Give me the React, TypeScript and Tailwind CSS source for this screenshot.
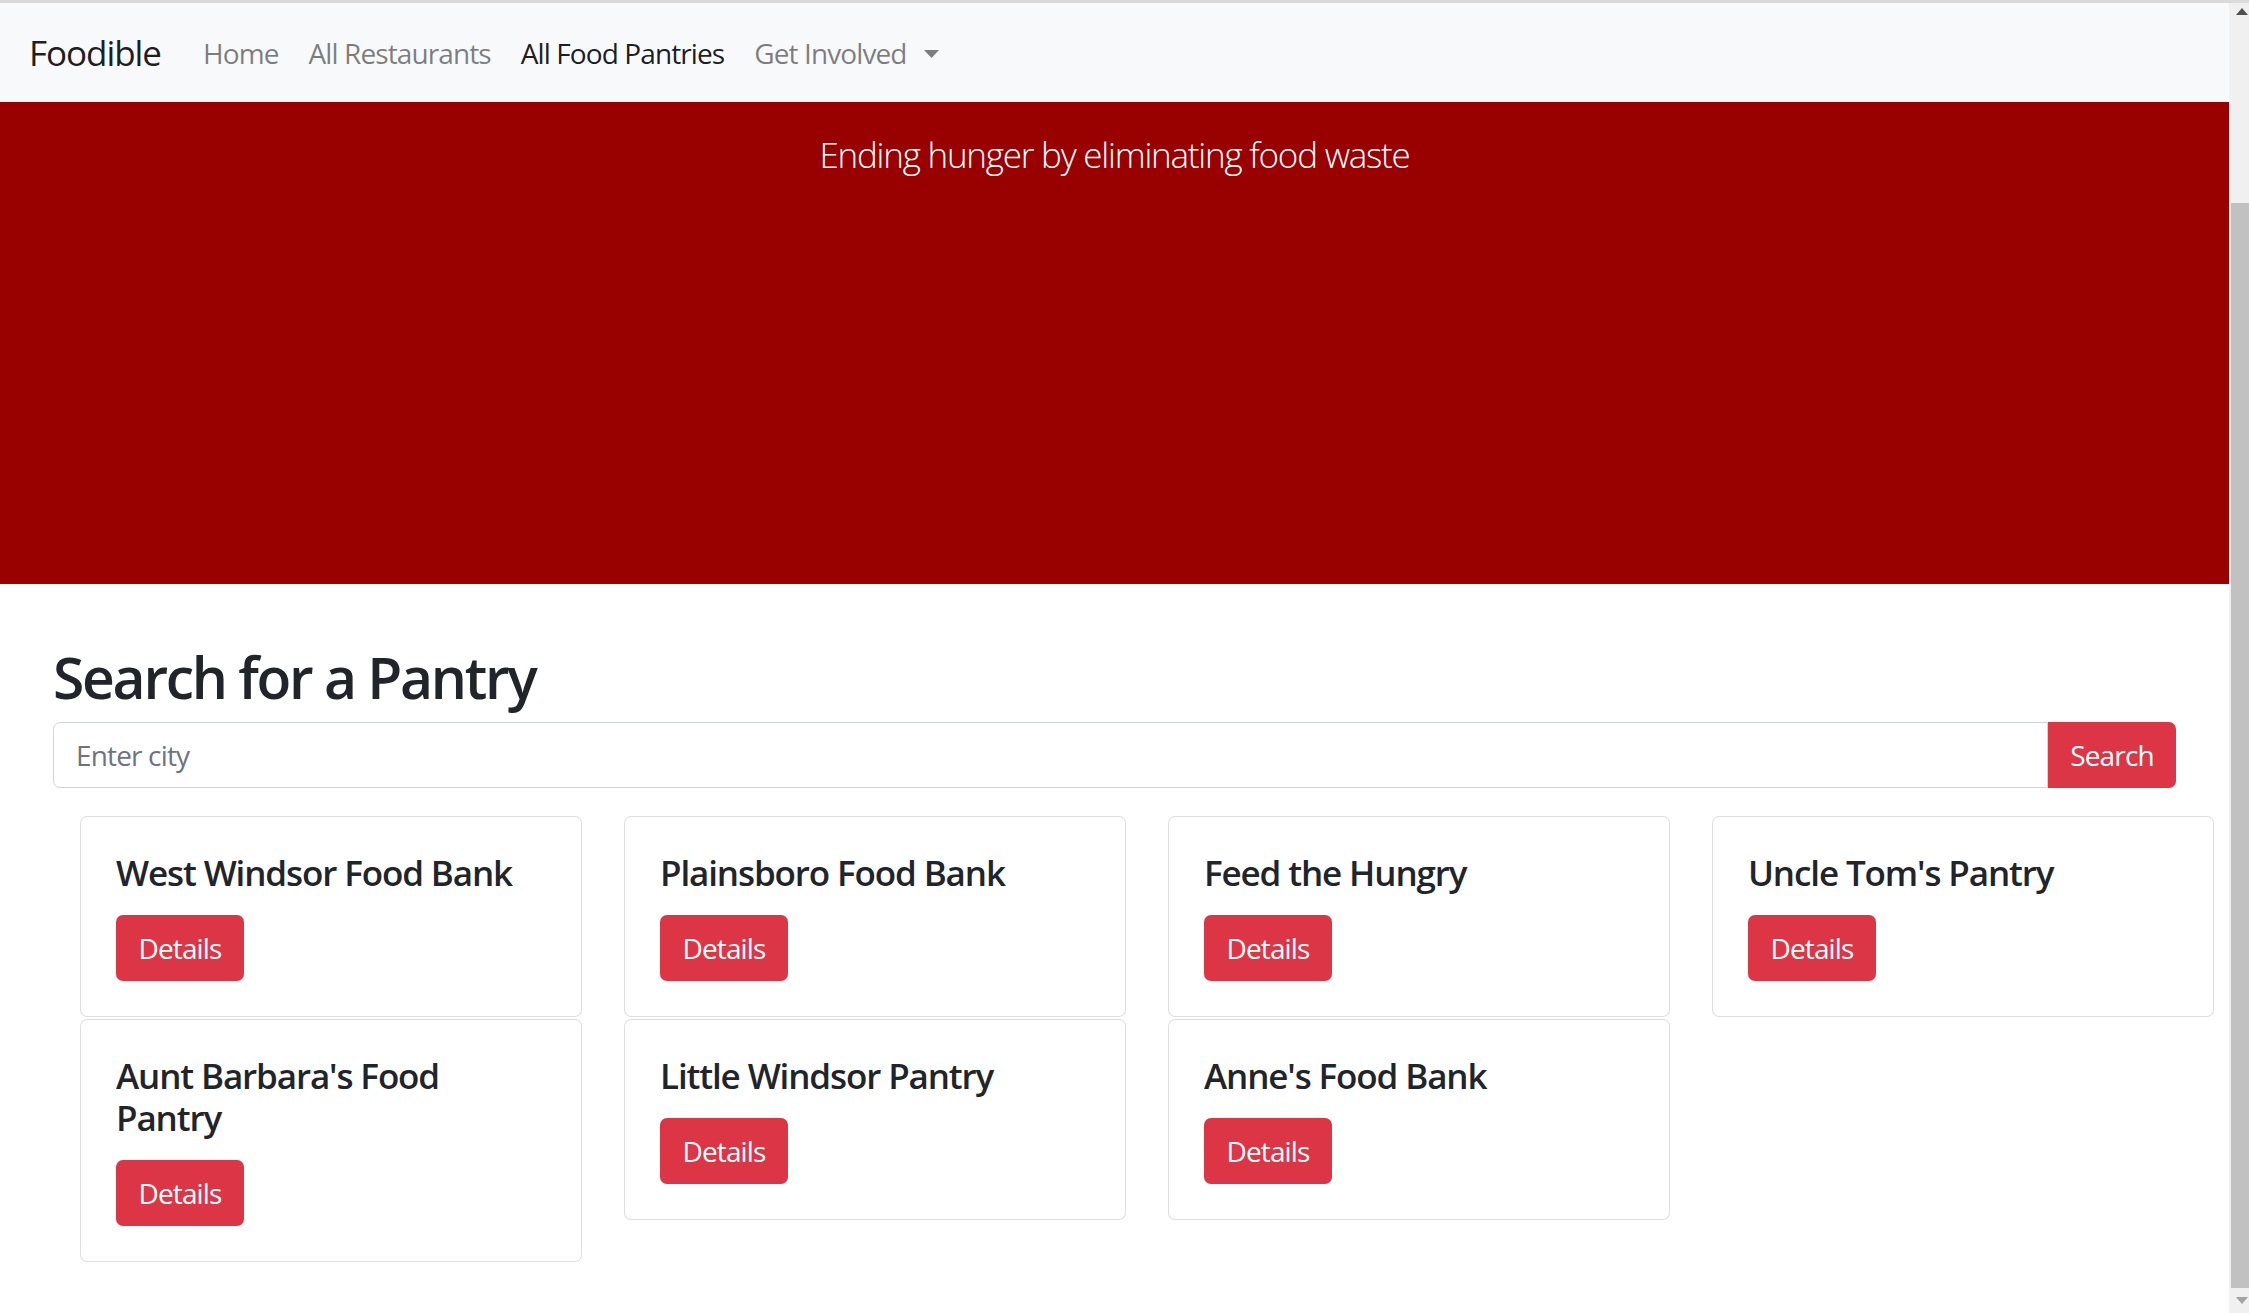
import React from "react";

const pantries: string[][] = [
  ["West Windsor Food Bank"],
  ["Plainsboro Food Bank"],
  ["Feed the Hungry"],
  ["Uncle Tom's Pantry"],
  ["Aunt Barbara's Food", "Pantry"],
  ["Little Windsor Pantry"],
  ["Anne's Food Bank"],
];

const font = { fontFamily: '"Open Sans", "Noto Sans", sans-serif' };

function Navbar() {
  return (
    <nav className="flex h-[99px] shrink-0 items-center bg-[#f8f9fa] px-[29px]">
      <span className="mr-[42px] text-[35px] leading-none tracking-[-0.03em] text-[#000000e6]">Foodible</span>
      <div className="flex items-center gap-[30px] text-[28px] leading-none tracking-[-0.032em]">
        <span className="text-[#00000080]">Home</span>
        <span className="text-[#00000080]">All Restaurants</span>
        <span className="text-[#000000e6]">All Food Pantries</span>
        <span className="flex items-center text-[#00000080]">
          Get Involved
          <svg className="ml-[17px] mt-[2px]" width="15" height="8" viewBox="0 0 15 8">
            <polygon points="0,0 15,0 7.5,8" fill="#00000080" />
          </svg>
        </span>
      </div>
    </nav>
  );
}

function Card({ lines }: { lines: string[] }) {
  return (
    <div className="rounded-[7px] border border-[#00000020] bg-white p-[35px]">
      <h5 className="mb-[21px] text-[35px] font-semibold leading-[1.2] tracking-[-0.032em] text-[#212529]">
        {lines.length > 1 ? (
          <>
            {lines[0]}
            <br />
            {lines[1]}
          </>
        ) : (
          lines[0]
        )}
      </h5>
      <button className="h-[66px] w-[128px] rounded-[7px] bg-[#dc3545] text-[28px] leading-none tracking-[-0.03em] text-white">
        Details
      </button>
    </div>
  );
}

function Scrollbar() {
  return (
    <div className="flex w-[20px] shrink-0 flex-col bg-[#f0f0f0]">
      <div className="flex h-[17px] items-center justify-end pr-[1px]">
        <svg width="12" height="7" viewBox="0 0 12 7">
          <polygon points="0,7 12,7 6,0" fill="#505050" />
        </svg>
      </div>
      <div className="mt-[183px] ml-[2px] h-[1085px] bg-[#c1c1c1]" />
      <div className="flex flex-1 items-center justify-end pr-[1px]">
        <svg width="12" height="7" viewBox="0 0 12 7">
          <polygon points="0,0 12,0 6,7" fill="#a3a3a3" />
        </svg>
      </div>
    </div>
  );
}

export default function App() {
  return (
    <div className="flex h-[1313px] w-full flex-col overflow-hidden bg-white" style={font}>
      <div className="h-[3px] shrink-0 bg-[#dadada]" />
      <div className="flex min-h-0 flex-1">
        <main className="flex min-w-0 flex-1 flex-col">
          <Navbar />
          <section className="flex h-[482px] shrink-0 justify-center bg-[#990000] pt-[27px]">
            <p className="text-[35px] font-light leading-[1.5] tracking-[-0.035em] text-white">
              Ending hunger by eliminating food waste
            </p>
          </section>
          <div className="px-[53px] pt-[59px]">
            <h2 className="mb-[11px] text-[57px] font-semibold leading-[1.2] tracking-[-0.04em] text-[#212529]">
              Search for a Pantry
            </h2>
            <div className="flex h-[66px]">
              <input
                className="min-w-0 flex-1 rounded-l-[7px] border border-[#ced4da] px-[22px] text-[28px] tracking-[-0.03em] text-[#495057] outline-none placeholder:text-[#6c757d]"
                placeholder="Enter city"
              />
              <button className="w-[128px] rounded-r-[7px] bg-[#dc3545] text-[28px] leading-none tracking-[-0.03em] text-white">
                Search
              </button>
            </div>
          </div>
          <div className="mt-[28px] ml-[80px] grid w-[2134px] grid-cols-[repeat(4,502px)] items-start gap-x-[42px] gap-y-[2px]">
            {pantries.map((p) => (
              <Card key={p.join(" ")} lines={p} />
            ))}
          </div>
        </main>
        <Scrollbar />
      </div>
    </div>
  );
}
